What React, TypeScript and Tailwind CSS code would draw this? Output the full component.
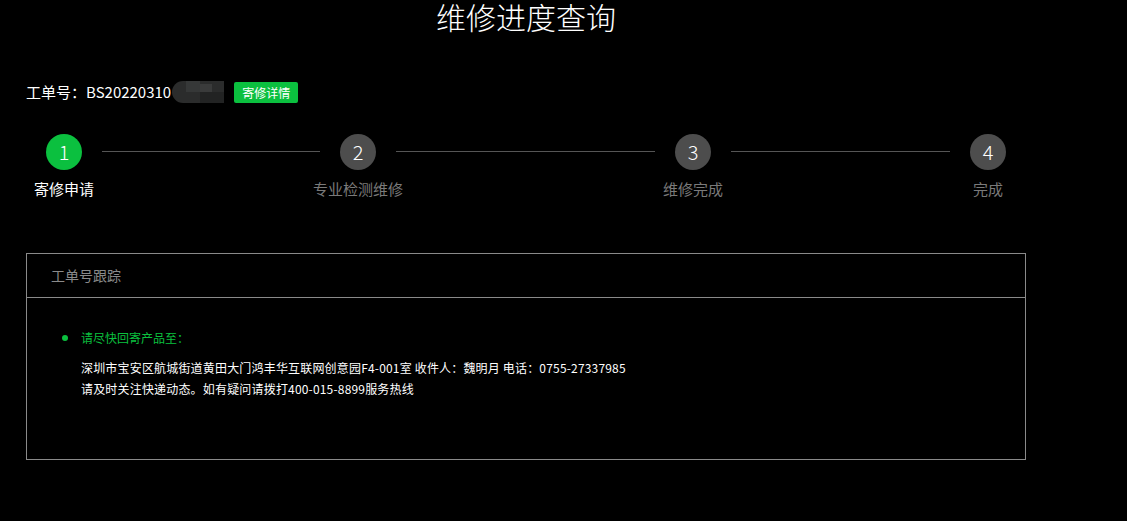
import React from "react";

const FONT = { fontFamily: '"Noto Sans CJK SC", "Noto Sans", sans-serif' };

const STEPS = [
  { n: 1, label: "寄修申请", active: true },
  { n: 2, label: "专业检测维修", active: false },
  { n: 3, label: "维修完成", active: false },
  { n: 4, label: "完成", active: false },
];

const LINE_WIDTHS = ["w-[218px]", "w-[259px]", "w-[219px]"];

function Step({ n, label, active }: { n: number; label: string; active: boolean }) {
  return (
    <div className="flex w-[76px] shrink-0 flex-col items-center">
      <div
        className={`flex h-[36px] w-[36px] items-center justify-center rounded-full text-[20px] font-light leading-none text-white ${
          active ? "bg-[#0bc03f]" : "bg-[#4d4d4d]"
        }`}
      >
        {n}
      </div>
      <div
        className={`mt-[9px] whitespace-nowrap text-[15px] leading-[20px] ${
          active ? "text-white" : "text-[#7a7a7a]"
        }`}
      >
        {label}
      </div>
    </div>
  );
}

export default function App() {
  return (
    <div className="min-h-[521px] w-full overflow-hidden bg-black" style={FONT}>
      <div className="ml-[26px] w-[1000px]">
        {/* Title */}
        <h1 className="text-center text-[30px] font-light leading-[32px] text-white">
          维修进度查询
        </h1>

        {/* Order number */}
        <div className="mt-[48px] flex h-[24px] items-center">
          <span className="text-[15px] text-white">工单号：BS20220310</span>
          <div className="relative ml-[1px] h-[22px] w-[52px] overflow-hidden rounded-l-full bg-[#2b2c2c]">
            <div className="absolute left-[14px] top-0 h-[11px] w-[14px] bg-[#363838]" />
            <div className="absolute left-[28px] top-[3px] h-[8px] w-[12px] bg-[#3a3b3b]" />
            <div className="absolute left-[28px] top-[11px] h-[11px] w-[24px] bg-[#222323]" />
          </div>
          <button className="ml-[10px] h-[21px] rounded-[2px] bg-[#0bc03f] px-[8px] text-[12px] leading-[21px] text-white">
            寄修详情
          </button>
        </div>

        {/* Steps */}
        <div className="mt-[30px] flex items-start">
          {STEPS.map((s, i) => (
            <React.Fragment key={s.n}>
              <Step {...s} />
              {i < LINE_WIDTHS.length && (
                <div className={`mt-[17px] h-px shrink-0 bg-[#555] ${LINE_WIDTHS[i]}`} />
              )}
            </React.Fragment>
          ))}
        </div>

        {/* Tracking card */}
        <div className="mt-[54px] h-[207px] border border-[#8a8a8a]">
          <div className="flex h-[44px] items-center border-b border-[#8a8a8a] px-[24px] text-[14px] text-[#8a8a8a]">
            工单号跟踪
          </div>
          <div className="px-[35px] pt-[30px]">
            <div className="flex items-center text-[12px] leading-[20px] text-[#0bc03f]">
              <span className="mr-[13px] h-[6px] w-[6px] rounded-full bg-[#0bc03f]" />
              请尽快回寄产品至：
            </div>
            <div className="ml-[19px] mt-[9px] text-[12px] leading-[21px] tracking-[0.18px] text-white">
              <div>深圳市宝安区航城街道黄田大门鸿丰华互联网创意园F4-001室 收件人：魏明月 电话：0755-27337985</div>
              <div>请及时关注快递动态。如有疑问请拨打400-015-8899服务热线</div>
            </div>
          </div>
        </div>
      </div>
    </div>
  );
}
